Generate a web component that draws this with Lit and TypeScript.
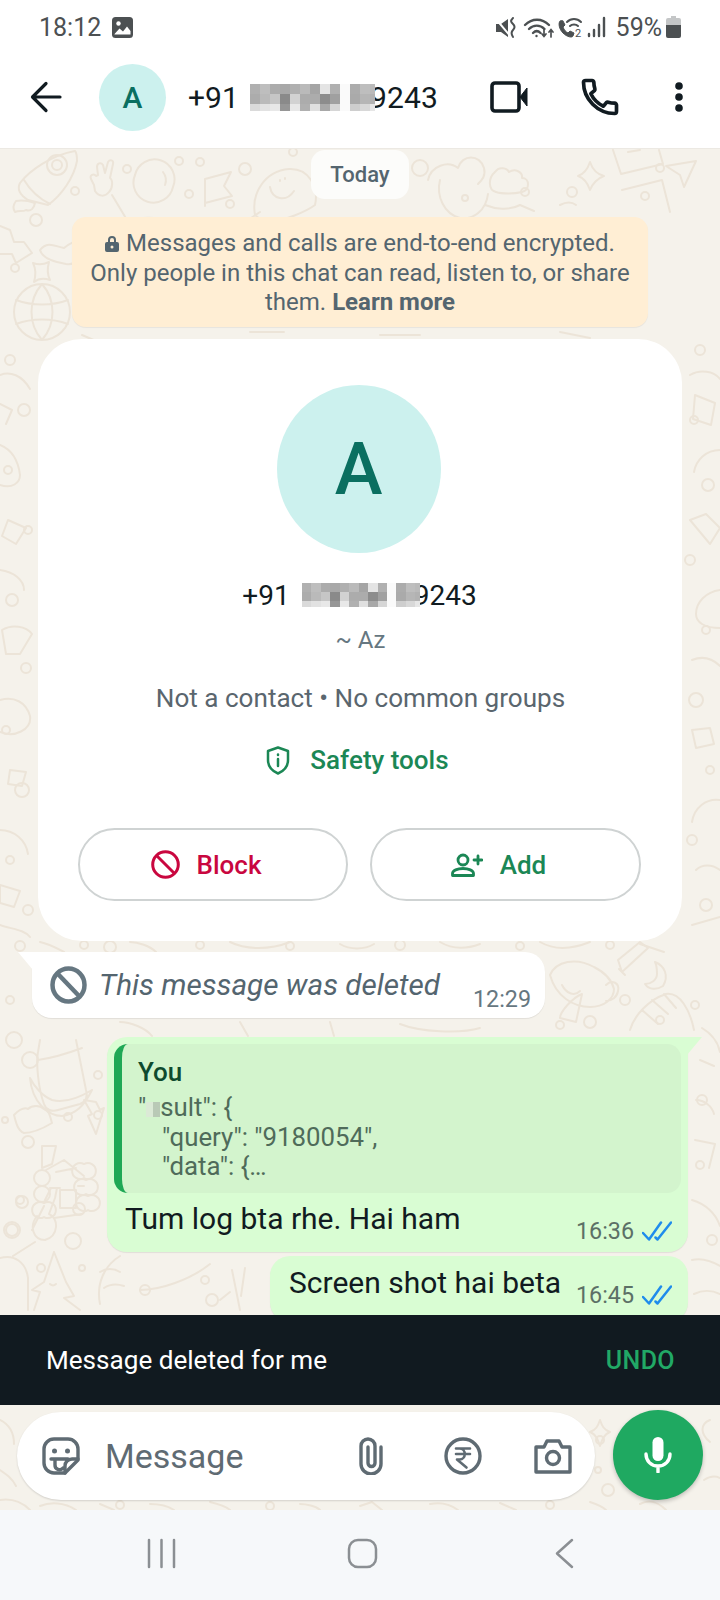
import { LitElement, html, css, svg } from "lit";
import { customElement } from "lit/decorators.js";

// grey levels for the blurred digits in the phone number
const MASK_ROWS = [
  [176, 190, 172, 168, 176, 186, 165, 228, 176, 250, 172, 190, 186],
  [172, 186, 198, 138, 210, 172, 172, 140, 160, 250, 170, 182, 178],
  [218, 226, 232, 150, 232, 176, 224, 168, 214, 250, 206, 216, 230],
];

const pixelMask = (cls: string) => html`<svg class="mask ${cls}" viewBox="0 0 125 27" preserveAspectRatio="none" shape-rendering="crispEdges">
  ${MASK_ROWS.map((row, y) =>
    row.map((g, x) => svg`<rect x=${x * 10} y=${y * 10} width="10" height=${y === 2 ? 7 : 10} fill="rgb(${g},${g},${g})"></rect>`)
  )}
</svg>`;

const dots: [number, number, number][] = [
  [179, 161, 4], [200, 162, 4], [127, 169, 4], [245, 169, 6], [189, 194, 4], [230, 204, 4], [75, 191, 4], [36, 220, 6], [15, 268, 4],
  [293, 152, 4], [420, 168, 8], [465, 198, 3], [525, 192, 4], [572, 192, 5], [660, 168, 4], [645, 196, 4],
  [10, 360, 5], [24, 410, 6], [8, 470, 4], [28, 530, 4], [12, 600, 6], [26, 668, 5], [6, 730, 4], [22, 790, 7], [10, 860, 4], [28, 910, 5],
  [700, 350, 5], [694, 420, 4], [708, 485, 6], [690, 560, 5], [706, 630, 4], [696, 700, 7], [710, 770, 4], [692, 840, 5], [706, 905, 6],
  [20, 946, 5], [84, 945, 4], [110, 947, 6], [200, 945, 4], [290, 946, 4], [400, 945, 5], [520, 946, 4], [610, 945, 4],
  [10, 1000, 4], [14, 1040, 8], [30, 1060, 8], [98, 1075, 4], [98, 1115, 4], [68, 1117, 4], [28, 1142, 6], [5, 1120, 3],
  [20, 1200, 4], [22, 1202, 6], [79, 1209, 6], [12, 1230, 6], [73, 1241, 8], [12, 1230, 8], [82, 1268, 3], [41, 1268, 4],
  [560, 1025, 4], [590, 1022, 6], [625, 1000, 5], [660, 1020, 4], [695, 1005, 4], [702, 1100, 5], [700, 1165, 4], [712, 1240, 5],
  [205, 1280, 4], [145, 1290, 5], [212, 1300, 6], [120, 1505, 4], [270, 1506, 4], [550, 1505, 4], [600, 1440, 4], [608, 1490, 6], [598, 1470, 3],
];

const shapes = [
  // rocket, ring and flame
  "M75 151C52 155 30 170 20 183c-3 6 0 12 8 17l20 5c14-10 26-28 29-44 0-5-1-9-2-10zM24 180c6 10 14 18 26 24M16 201c-3 4-3 8-1 11 4-2 8 0 11-2 5 2 8-2 9-7-6-2-13-3-19-2z",
  "M47 165a10 10 0 1 0 20 0 10 10 0 1 0-20 0zM52 165a5 5 0 1 0 10 0 5 5 0 1 0-10 0z",
  // peace hand, astronaut and helmet
  "M94 185l-3-6c-2-4 3-6 5-3l2-1-1-8c0-4 4-5 6-2l2 8 3-11c2-3 6-2 5 2l-3 14c3 2 3 10-1 14-4 5-10 5-14-1zM112 195l18 30M135 175a20 20 0 1 0 38 12 20 20 0 1 0-38-12zM163 172c3 4 4 8 2 13M116 238c6-14 20-22 38-20 14 2 26 8 36 13",
  // flag
  "M205 206V179l26-7-7 14 8 10-27 7",
  // smiling face
  "M255 215c-4-22 10-44 34-46 20-1 30 18 26 36-8 6-30 16-50 18zM270 187c2 12 16 16 24 4M280 180v1M285 178v1M248 220l12-8",
  // arrow and blob on the left
  "M0 226l10 4 4 12h10l8 11-16 10-4-9H0M40 250c8-10 16-3 24-2 12-10 26-10 30-4-8 8-14 22-28 20-12-2-24-6-26-14z",
  // four point star
  "M33 263c5 2 10 2 16-1-2 7-2 12 1 18-6-2-11-2-16 2 2-7 2-13-1-19z",
  // globe
  "M14 312a28 28 0 1 0 56 0 28 28 0 1 0-56 0zM42 284c-14 16-14 40 0 56M42 284c14 16 14 40 0 56M16 300c16 6 36 6 52 0M16 324c16-6 36-6 52 0",
  // left edge of the encryption banner
  "M82 335l14 6M250 332h34M380 335h40M560 332l30 6",
  // girl with a bun, cloud, star, frames and paper plane on the right
  "M428 180c3-14 20-20 30-12 4-14 22-14 26 0 2 8-2 12-6 16M440 180c-4 16 4 34 20 38 14 2 26-8 28-24",
  "M495 172c4-6 12-4 14 0 6-4 14 0 13 6 8 0 8 12 0 14-8 2-20 2-26 0-8-2-8-14-1-20z",
  "M578 176c6-2 10-8 12-14 2 6 6 12 14 14-6 2-12 8-14 14-2-6-6-12-12-14z",
  "M613 150l8 24 42-10-4-14M622 190l40-10 8 32M640 150l-12 2",
  "M666 166l30-5-12 26-4-12z",
  "M485 205c10 4 24 6 35 0l14 6M560 205c6-3 12-3 16 0",
  // left column, scattered behind the card
  "M0 375c10-4 22 0 30 14M0 404l12 6-6 14M0 445c10 4 18 14 20 30 0 8-8 14-20 10M8 520l18 8-10 16-14-8zM0 570c14 2 24 10 24 20M2 630c10-6 24-4 30 4l-12 20H6zM0 700c14-4 26 2 30 16 2 14-16 22-30 16M10 770l16 2-4 14-14-2zM0 830c14 0 26 10 28 24M0 885l20 6-6 16-14-4zM0 925c10 4 24 4 30 12",
  // right column, scattered behind the card
  "M690 375c10-6 24-4 30 4M695 395l20 8-4 22-18-6zM720 450c-14 0-24 10-26 22M690 520l16-6 14 14-10 16zM720 590c-14 2-24 12-24 24 0 8 8 14 24 14M692 660c10-4 20-2 28 6M692 730l18-2 4 16-18 4zM720 800c-14-2-26 8-28 22M696 870c6-6 16-6 24 0M692 925l28-8",
  // strip under the card
  "M40 942c10 2 20 8 24 10M130 942c8 0 20 4 26 10M230 942c16 8 40 8 60 0M340 944c10 6 24 6 34 0M440 942c10 6 24 8 40 2M540 942c14 8 30 8 50 0M640 944l24 8",
  // mug, moon, ball and tick on the right of the deleted message
  "M550 975c6-14 26-18 44-8 12 6 18 14 20 22 0 10-10 18-24 18-16 0-34-10-40-32zM606 985c6-6 14-2 12 6-1 6-6 10-12 10M562 985c4 8 12 12 18 6",
  "M618 960l22-18 8 6-26 24zM625 975l-6-6",
  "M655 962c10 4 14 14 8 24-6 4-14 4-18-2 6 0 12-4 12-10 0-4 0-8-2-12z",
  "M630 1030c4-14 18-30 36-36 14-2 24 16 28 36M642 1010l16 14M652 1000l16 14M664 994l12 14",
  "M560 1018c0-6 12-20 22-24l-6 28zM400 1024c20 8 60 10 80 4M330 1022l4 14M240 1022l8 14M120 1022c10 0 26 6 32 14",
  // bag and banana beside the quoted message
  "M40 1040l-2 12c-2 10 0 36 6 52 2 6 8 8 14 6l22-6c6-2 8-8 6-14l-10-50M38 1060c14-2 28-6 44-12M30 1078c2 24 18 38 32 38 14-2 22-10 30-26-10 6-26 14-40 10-10-4-18-14-22-22z",
  // toy brick and lightning
  "M14 1115c6-6 10-8 14-6 4-4 12-4 16 0 6 2 6 8 8 14-10 6-20 10-28 10-6-2-8-10-10-18zM84 1100l12 2 4 8 4-2-8 26-8-18 4-2z",
  // log cabin
  "M42 1146h14l-4 18-10 4zM46 1170l18-10 20 16M42 1170a8 8 0 1 0 0 16 8 8 0 1 0 0-16zM42 1186a8 8 0 1 0 0 16 8 8 0 1 0 0-16zM44 1203a8 8 0 1 0 0 14 8 8 0 1 0 0-14zM84 1164a8 8 0 1 0 0 14 8 8 0 1 0 0-14zM86 1180a8 8 0 1 0 0 14 8 8 0 1 0 0-14zM88 1196a8 8 0 1 0 0 14 8 8 0 1 0 0-14zM56 1172l20-4M60 1190h16v18H60zM50 1188h10M78 1186h6M54 1218l28-4",
  // lollipop key and tree at the bottom left
  "M44 1206l-12 24M45 1200l6-12h6l-2 10-6 16c10 4 10 22-4 26-12 0-16-14-8-24M35 1242l-22 14M0 1258c14-4 26 4 28 20v32M54 1252l-10 30-12 8 8 2-6 18M54 1252l12 30 8 14-10 2 16 12M50 1284c2 2 4 2 6 0",
  // scribble and cap on the far side of the bottom bubble
  "M120 1256c-16 10-24 28-20 48M100 1272c6-4 14-4 20 0M104 1288c6-4 14-4 20-2M140 1290c20 0 50-10 70-26M232 1270l8 40M245 1268l-4 28M220 1300l10-8",
  "M702 1028c10 6 16 14 18 24M700 1060l14 6M696 1100c8 0 16 6 18 14M695 1140l20 4-6 24M692 1200c14 4 24 14 28 26M692 1260c8-2 18 0 28 6M694 1294c8-4 18-4 26 0",
  // strip around the text field
  "M0 1420c8 4 14 12 14 24M0 1470c6 4 12 8 16 16M0 1500c14-2 24 4 30 10M40 1506c10-4 24-4 36 4M100 1504l14 6M150 1504c8 0 18 2 24 6M210 1502c8 2 16 4 20 8M300 1504c6 0 16 2 20 6M360 1506l12-4 10 8M430 1504c10-2 20 0 28 6M500 1503l16 7M590 1502c6 2 12 4 16 8",
  "M600 1420c2 6 4 10 10 12-6 2-8 8-10 14-2-6-4-12-10-14 6-2 8-6 10-12zM640 1504c8-4 16-4 26 6M710 1420c-10 4-10 14 0 22M704 1480c6-4 12-4 16-2",
];

const wallDoodles = html`<svg class="doodles" viewBox="0 149 720 1361" fill="none" stroke="#ece4d8" stroke-width="2" stroke-linecap="round" stroke-linejoin="round">
  ${shapes.map((d) => svg`<path d=${d}></path>`)}
  ${dots.map(([x, y, r]) => svg`<circle cx=${x} cy=${y} r=${r}></circle>`)}
</svg>`;

const doubleTick = html`<svg class="ticks" viewBox="0 0 30 20" fill="none" stroke="#1f8cec" stroke-width="2.500" stroke-linecap="round" stroke-linejoin="round">
  <path d="M1 12l6 6.500L19 1.500M13.500 16.500l2 2L29 1.500"></path>
</svg>`;

@customElement("app-root")
export class AppRoot extends LitElement {
  static styles = css`
    :host {
      display: block;
      width: 720px;
      height: 1600px;
      overflow: hidden;
      background: #fff;
      font-family: Roboto, "Noto Sans", sans-serif;
      color: #111b21;
    }
    svg { display: block; flex: none; }

    .status {
      height: 50px;
      display: flex;
      align-items: center;
      padding: 4px 39px 0 39px;
      box-sizing: border-box;
      color: #4c5052;
      font-size: 25px;
    }
    .status .gallery { margin-left: 11px; }
    .status .signals { margin-left: auto; }
    .status .level { margin-left: 9px; }
    .status .battery { margin-left: 4px; }

    .header {
      height: 99px;
      display: flex;
      align-items: center;
      padding: 0 0 4px 30px;
      box-sizing: border-box;
      border-bottom: 1px solid #ece9e3;
    }
    .avatar {
      border-radius: 50%;
      background: #ccf1ee;
      color: #0a6f60;
      font-weight: 500;
      display: flex;
      align-items: center;
      justify-content: center;
      flex: none;
    }
    .avatar.small { width: 67px; height: 67px; margin-left: 37px; font-size: 30px; }
    .avatar.large { width: 164px; height: 168px; margin-right: 4px; font-size: 72px; }
    .number { display: flex; align-items: center; }
    .header .number { margin-left: 22px; font-size: 30px; letter-spacing: 0.1px; }
    .mask { position: relative; z-index: 1; }
    .mask.head { width: 125px; height: 27px; margin: 0 -5px 0 11px; }
    .mask.body { width: 118px; height: 24px; margin: 0 -6px 0 12px; }
    .header .video { margin-left: auto; }
    .header .call { margin-left: 50px; }
    .header .more { margin: 0 37px 0 53px; }

    .wall {
      position: relative;
      height: 1361px;
      background: #f5f2eb;
      overflow: hidden;
      display: flex;
      flex-direction: column;
    }
    .doodles { position: absolute; left: 0; top: 0; width: 720px; height: 1361px; }

    .chat {
      position: relative;
      height: 1166px;
      overflow: hidden;
      flex: none;
      display: flex;
      flex-direction: column;
      align-items: flex-start;
    }
    .chat > * { flex: none; }
    .day {
      align-self: center;
      margin-top: 1px;
      width: 98px;
      height: 49px;
      border-radius: 14px;
      background: #fcfcfa;
      color: #54656f;
      font-size: 22px;
      font-weight: 500;
      display: flex;
      align-items: center;
      justify-content: center;
    }
    .notice {
      align-self: center;
      margin-top: 18px;
      width: 576px;
      height: 110px;
      padding-top: 12px;
      box-sizing: border-box;
      border-radius: 14px;
      background: #ffeed4;
      box-shadow: 0 1px 1px rgba(0, 0, 0, 0.06);
      color: #54656f;
      font-size: 24px;
      line-height: 29.5px;
      text-align: center;
    }
    .notice svg { display: inline-block; margin-right: 7px; vertical-align: -1px; }
    .notice b { font-weight: 700; }

    .card {
      align-self: center;
      margin: 12px 0 0 0;
      width: 644px;
      height: 602px;
      padding: 46px 39px 0 40px;
      box-sizing: border-box;
      border-radius: 44px;
      background: #fff;
      display: flex;
      flex-direction: column;
      align-items: center;
    }
    .card .number { margin: 24px 2px 0 0; height: 36px; font-size: 28px; }
    .alias { margin-top: 12px; line-height: 30px; font-size: 24px; color: #667781; }
    .facts { margin-top: 27px; line-height: 32px; font-size: 26.1px; color: #5a666e; }
    .safety {
      margin-top: 31px;
      padding-right: 6px;
      display: flex;
      align-items: center;
      gap: 20px;
      color: #1b8755;
      font-size: 26px;
      font-weight: 500;
    }
    .actions {
      margin-top: 53px;
      width: 100%;
      display: grid;
      grid-template-columns: 270px 271px;
      gap: 22px;
    }
    .pill {
      height: 73px;
      border: 2px solid #cfd3d3;
      border-radius: 37px;
      box-sizing: border-box;
      display: flex;
      align-items: center;
      justify-content: center;
      gap: 17px;
      padding-right: 14px;
      font-size: 26px;
      font-weight: 500;
    }
    .pill.block { color: #c9073f; }
    .pill.add { color: #1b8755; }

    .bubble {
      position: relative;
      box-sizing: border-box;
      border-radius: 20px;
      box-shadow: 0 1px 1px rgba(0, 0, 0, 0.08);
    }
    .bubble.in {
      margin: 11px 0 0 32px;
      width: 513px;
      height: 66px;
      background: #fff;
      border-top-left-radius: 0;
      display: flex;
      align-items: center;
      padding: 0 16px 0 18px;
    }
    .bubble.in::before {
      content: "";
      position: absolute;
      left: -14px;
      top: 0;
      width: 15px;
      height: 18px;
      background: #fff;
      clip-path: polygon(0 0, 100% 0, 100% 100%);
    }
    .bubble.out { align-self: flex-end; margin-right: 32px; background: #d9fdd3; border-top-right-radius: 0; }
    .bubble.plain { border-top-right-radius: 20px; }
    .bubble.tail::after {
      content: "";
      position: absolute;
      right: -14px;
      top: 0;
      width: 15px;
      height: 18px;
      background: #d9fdd3;
      clip-path: polygon(0 0, 100% 0, 0 100%);
    }
    .deleted {
      margin-left: 12px;
      margin-top: -2px;
      font-size: 29.7px;
      font-style: italic;
      color: #54656f;
    }
    .stamp {
      position: absolute;
      right: 16px;
      bottom: 8px;
      display: flex;
      align-items: center;
      gap: 8px;
      font-size: 23.3px;
      line-height: 26px;
      color: #5c7066;
    }
    .in .stamp { right: 14px; bottom: 6px; color: #667781; }
    .ticks { width: 30px; height: 20px; }

    .reply { margin-top: 19px; width: 581px; height: 215px; padding: 7px 7px 0 7px; }
    .quote {
      height: 149px;
      box-sizing: border-box;
      border-left: 8px solid #1fa855;
      border-radius: 14px;
      background: #d3f4cd;
      padding: 13px 0 0 16px;
      font-size: 25.8px;
      line-height: 29.5px;
      color: #4f6b5a;
    }
    .who { font-size: 26px; font-weight: 500; color: #0e4a2e; margin-bottom: 6px; line-height: 30px; }
    .quote div.sub { padding-left: 24px; }
    .blot { display: inline-block; width: 14px; height: 15px; vertical-align: -1px; background: linear-gradient(90deg, #dbe9d6 50%, #b9c9b6 50%); }
    .text { font-size: 30px; line-height: 36px; color: #111b21; }
    .reply .text { margin: 8px 0 0 11px; }
    .plain { margin-top: 4px; width: 418px; height: 66px; padding: 9px 0 0 19px; }
    .plain .stamp { bottom: 14px; }

    .snack {
      position: relative;
      height: 90px;
      flex: none;
      background: #111a20;
      color: #fff;
      display: flex;
      align-items: center;
      justify-content: space-between;
      padding: 0 45px 0 46px;
      font-size: 26.1px;
    }
    .snack span:last-child { color: #21a966; font-weight: 500; font-size: 25px; letter-spacing: 0.4px; }

    .composer {
      position: relative;
      display: flex;
      align-items: flex-start;
      padding: 5px 17px 0 17px;
      gap: 18px;
    }
    .field {
      width: 578px;
      height: 88px;
      margin-top: 2px;
      border-radius: 44px;
      background: #fff;
      box-shadow: 0 1px 2px rgba(0, 0, 0, 0.14);
      display: flex;
      align-items: center;
      padding: 0 23px 0 25px;
      box-sizing: border-box;
      color: #5f6b73;
      font-size: 34px;
    }
    .field .hint { margin-left: 25px; }
    .field .clip { margin-left: auto; }
    .field .rupee { margin-left: 60px; }
    .field .camera { margin-left: 52px; }
    .mic {
      width: 90px;
      height: 90px;
      border-radius: 50%;
      background: #1fa961;
      box-shadow: 0 2px 4px rgba(0, 0, 0, 0.22);
      display: flex;
      align-items: center;
      justify-content: center;
      flex: none;
    }

    .nav {
      height: 90px;
      background: #f6f8fa;
      display: flex;
      align-items: flex-start;
    }
    .nav svg { width: 720px; height: 90px; }
  `;

  render() {
    return html`
      <div class="status">
        <span>18:12</span>
        <svg class="gallery" width="21" height="21" viewBox="0 0 21 21">
          <rect width="21" height="21" rx="3.500" fill="#4c5052"></rect>
          <circle cx="6.500" cy="6.500" r="2.200" fill="#fff"></circle>
          <path d="M2.500 17l5-5.500 3.500 3 4-5 3.500 4.500V17.500H2.500z" fill="#fff"></path>
        </svg>
        <svg class="signals" width="112" height="26" viewBox="494 13 112 26" fill="none" stroke="#4c5052" stroke-linecap="round">
          <path d="M495 23h5l7-5v18l-7-5h-5z" fill="#4c5052" stroke="none"></path>
          <path d="M494 17l16 19" stroke="#fff" stroke-width="2"></path>
          <path d="M512 17c-3 3-2 4 0 6s2 4 0 6-2 4 0 7" stroke-width="2"></path>
          <path d="M524 24c7-7 17-7 24 0M528 28c4.500-4.500 11-4.500 15.500 0M532 32c2.500-2.500 5-2.500 7.500 0" stroke-width="2.400"></path>
          <circle cx="535.500" cy="35" r="1.200" fill="#4c5052" stroke="none"></circle>
          <path d="M543 28v7M541 33l2 2.500 2-2.500M550 36v-7M548 31l2-2.500 2 2.500" stroke-width="1.700"></path>
          <path d="M559 20c-2 2-1 8 3 12s9 5 10 3l1-3-4-2-2 2c-2-1-4-3-5-6l2-2-2-4z" fill="#4c5052" stroke="#4c5052" stroke-width="1"></path>
          <path d="M566 21c4-4 10-4 14 0M569 25c2-2 6-2 8 0" stroke-width="2"></path>
          <text x="574" y="36" font-size="11" fill="#4c5052" stroke="none" font-family="Roboto">2</text>
          <path d="M588 33v2M593 29v6M598 24v11M603 17v18" stroke-width="2.400"></path>
        </svg>
        <span class="level">59%</span>
        <svg class="battery" width="15" height="22" viewBox="0 0 15 22">
          <path d="M5 0h5v2h3a2 2 0 0 1 2 2v5H0V4a2 2 0 0 1 2-2h3z" fill="#c4c6c7"></path>
          <path d="M0 9h15v11a2 2 0 0 1-2 2H2a2 2 0 0 1-2-2z" fill="#4c5052"></path>
        </svg>
      </div>

      <div class="header">
        <svg width="32" height="32" viewBox="0 0 32 32" fill="none" stroke="#111b21" stroke-width="3.200" stroke-linecap="round" stroke-linejoin="round">
          <path d="M30 16H3M16 2.500L2.500 16 16 29.500"></path>
        </svg>
        <div class="avatar small">A</div>
        <div class="number"><span>+91</span>${pixelMask("head")}<span>9243</span></div>
        <svg class="video" width="38" height="32" viewBox="0 0 38 32" fill="none">
          <rect x="2" y="2" width="27" height="28" rx="3" stroke="#111b21" stroke-width="3.600"></rect>
          <path d="M30 16l7-9v18z" fill="#111b21" stroke="#111b21" stroke-linejoin="round" stroke-width="1"></path>
        </svg>
        <svg class="call" width="44" height="44" viewBox="0 0 24 24" fill="none" stroke="#111b21" stroke-width="2" stroke-linejoin="round">
          <path d="M20.010 15.380c-1.230 0-2.420-.2-3.530-.56-.35-.12-.74-.03-1.010.24l-1.570 1.970c-2.830-1.350-5.480-3.900-6.890-6.830l1.950-1.660c.27-.28.35-.67.24-1.020-.37-1.110-.56-2.300-.56-3.530 0-.54-.45-.99-.99-.99H4.190C3.650 3 3 3.240 3 3.990 3 13.280 10.730 21 20.010 21c.71 0 .99-.63.99-1.180v-3.450c0-.54-.45-.99-.99-.99z"></path>
        </svg>
        <svg class="more" width="8" height="30" viewBox="0 0 8 30" fill="#111b21">
          <circle cx="4" cy="4" r="3.800"></circle><circle cx="4" cy="15" r="3.800"></circle><circle cx="4" cy="26" r="3.800"></circle>
        </svg>
      </div>

      <div class="wall">
        ${wallDoodles}
        <div class="chat">
          <div class="day">Today</div>
          <div class="notice">
            <svg width="14" height="17" viewBox="0 0 14 17" fill="#54656f">
              <path d="M3 7V5a4 4 0 0 1 8 0v2h1a2 2 0 0 1 2 2v6a2 2 0 0 1-2 2H2a2 2 0 0 1-2-2V9a2 2 0 0 1 2-2zM5 7h4V5a2 2 0 0 0-4 0z"></path>
              <circle cx="7" cy="12" r="1.500" fill="#ffeed4"></circle>
            </svg>Messages and calls are end-to-end encrypted.<br />
            Only people in this chat can read, listen to, or share<br />
            them. <b>Learn more</b>
          </div>

          <div class="card">
            <div class="avatar large">A</div>
            <div class="number"><span>+91</span>${pixelMask("body")}<span>9243</span></div>
            <div class="alias">~ Az</div>
            <div class="facts">Not a contact • No common groups</div>
            <div class="safety">
              <svg width="24" height="29" viewBox="0 0 24 29" fill="none" stroke="#1b8755" stroke-width="2.500" stroke-linecap="round" stroke-linejoin="round">
                <path d="M12 1.500L2 5v9c0 6 4 11 10 13.500C18 25 22 20 22 14V5z"></path>
                <path d="M12 13v7M12 8.500v.5"></path>
              </svg>
              <span>Safety tools</span>
            </div>
            <div class="actions">
              <div class="pill block">
                <svg width="29" height="29" viewBox="0 0 29 29" fill="none" stroke="#c9073f" stroke-width="3">
                  <circle cx="14.500" cy="14.500" r="12.800"></circle><path d="M5.500 5.500l18 18"></path>
                </svg>
                <span>Block</span>
              </div>
              <div class="pill add">
                <svg width="32" height="24" viewBox="0 0 32 24" fill="none" stroke="#1b8755" stroke-width="2.800" stroke-linecap="round" stroke-linejoin="round">
                  <circle cx="12" cy="7" r="5"></circle>
                  <path d="M1.500 22.500v-2c0-3 5-5 10.500-5s10.500 2 10.500 5v2zM27 3v8M23 7h8"></path>
                </svg>
                <span>Add</span>
              </div>
            </div>
          </div>

          <div class="bubble in">
            <svg width="37" height="38" viewBox="0 0 37 38" fill="none" stroke="#667781" stroke-width="4.500">
              <ellipse cx="18.500" cy="19" rx="16" ry="16.500"></ellipse><path d="M7 7l23 24"></path>
            </svg>
            <span class="deleted">This message was deleted</span>
            <span class="stamp">12:29</span>
          </div>

          <div class="bubble out tail reply">
            <div class="quote">
              <div class="who">You</div>
              <div>"<span class="blot"></span>sult": {</div>
              <div class="sub">"query": "9180054",</div>
              <div class="sub">"data": {…</div>
            </div>
            <div class="text">Tum log bta rhe. Hai ham</div>
            <span class="stamp">16:36 ${doubleTick}</span>
          </div>

          <div class="bubble out plain">
            <div class="text">Screen shot hai beta</div>
            <span class="stamp">16:45 ${doubleTick}</span>
          </div>
        </div>

        <div class="snack"><span>Message deleted for me</span><span>UNDO</span></div>

        <div class="composer">
          <div class="field">
            <svg width="38" height="38" viewBox="0 0 38 38" fill="none" stroke="#5f6b73" stroke-width="3.400" stroke-linejoin="round" stroke-linecap="round">
              <path d="M12 2h14a10 10 0 0 1 10 10v11L23 36H12A10 10 0 0 1 2 26V12A10 10 0 0 1 12 2z"></path>
              <path d="M36 22h-6a7 7 0 0 0-7 7v7M9 22h17M13 23v5a4.500 4.500 0 0 0 8 3"></path>
              <circle cx="12.500" cy="14" r="2.500" fill="#5f6b73" stroke="none"></circle>
              <circle cx="25.500" cy="14" r="2.500" fill="#5f6b73" stroke="none"></circle>
            </svg>
            <span class="hint">Message</span>
            <svg class="clip" width="26" height="38" viewBox="0 0 26 38" fill="none" stroke="#5f6b73" stroke-width="3.400" stroke-linecap="round">
              <path d="M23 10v17a10 10 0 0 1-20 0V9a7 7 0 0 1 14 0v17a3.500 3.500 0 0 1-7 0V10"></path>
            </svg>
            <svg class="rupee" width="38" height="38" viewBox="0 0 38 38" fill="none" stroke="#5f6b73" stroke-width="3.400" stroke-linecap="round" stroke-linejoin="round">
              <circle cx="19" cy="19" r="17"></circle>
              <path d="M12 11.500h14M12 17h14M12 11.500h3.500c7 0 7 11 0 11H13l9.500 8" stroke-width="2.600"></path>
            </svg>
            <svg class="camera" width="38" height="35" viewBox="0 0 38 35" fill="none" stroke="#5f6b73" stroke-width="3.400" stroke-linejoin="round">
              <path d="M2 8h8l3-6h12l3 6h8v25H2z"></path>
              <circle cx="19" cy="19" r="6.500"></circle>
            </svg>
          </div>
          <div class="mic">
            <svg width="28" height="36" viewBox="0 0 28 36" fill="none" stroke="#fff" stroke-width="3.400" stroke-linecap="round">
              <rect x="8.500" y="0" width="11" height="24" rx="5.500" fill="#fff" stroke="none"></rect>
              <path d="M2 17c0 7 5 12 12 12s12-5 12-12M14 29v6"></path>
            </svg>
          </div>
        </div>
      </div>

      <div class="nav">
        <svg viewBox="0 1510 720 90" fill="none" stroke="#8b8f93" stroke-width="2.500" stroke-linecap="round" stroke-linejoin="round">
          <path d="M149 1540v27M161.500 1540v27M174 1540v27"></path>
          <rect x="349" y="1540" width="27" height="27" rx="9"></rect>
          <path d="M572 1540l-15 13.500 15 13.500"></path>
        </svg>
      </div>
    `;
  }
}
